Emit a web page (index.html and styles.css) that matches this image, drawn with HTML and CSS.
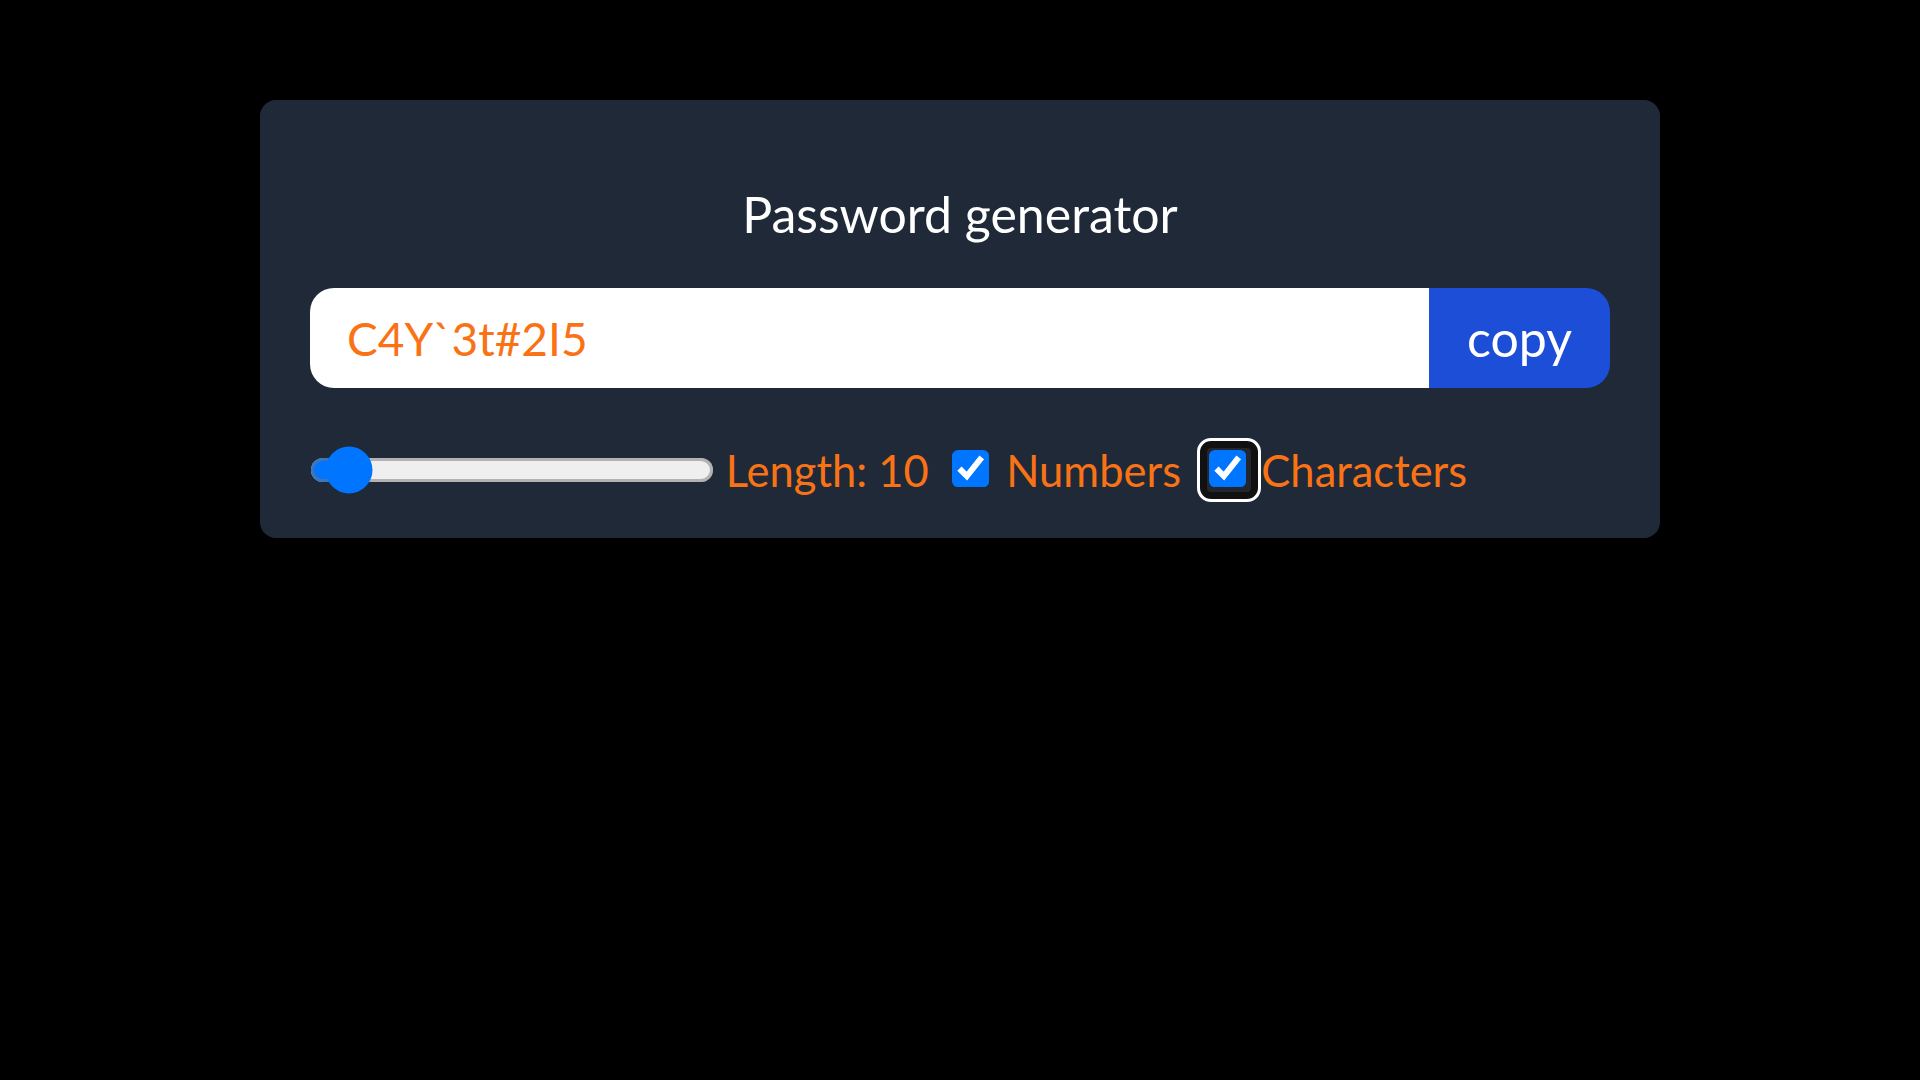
FILE: index.html
```html
<!DOCTYPE html>
<html lang="en">
<head>
<meta charset="utf-8">
<title>Password generator</title>
<link rel="stylesheet" href="styles.css">
</head>
<body>
  <div class="card">
    <h1 class="title">Password generator</h1>
    <div class="field-row">
      <input class="password" type="text" value="C4Y`3t#2I5" readonly>
      <button class="copy-btn" type="button">copy</button>
    </div>
    <div class="options">
      <input class="length-range" type="range" min="6" max="100" value="10">
      <label class="length-label">Length: 10</label>
      <input class="check" type="checkbox" id="numbers" checked>
      <label class="opt-label" for="numbers">Numbers</label>
      <span class="focus-ring"><input class="check" type="checkbox" id="chars" checked></span>
      <label class="opt-label chars-label" for="chars">Characters</label>
    </div>
  </div>
</body>
</html>
```
FILE: styles.css
```css
html, body {
  margin: 0;
  padding: 0;
  background: #000;
}
body {
  font-family: Lato, "Open Sans", sans-serif;
}
.card {
  width: 1400px;
  box-sizing: border-box;
  margin: 100px auto 0;
  padding: 84px 50px 33px;
  background: #1f2937;
  border-radius: 16px;
}
.title {
  margin: 0;
  font-weight: 400;
  font-size: 50px;
  line-height: 60px;
  color: #fff;
  text-align: center;
}
.field-row {
  display: flex;
  margin-top: 44px;
  height: 100px;
}
.password {
  flex: 1;
  min-width: 0;
  border: none;
  outline: none;
  margin: 0;
  padding: 0 37px;
  height: 100px;
  background: #fff;
  color: #f97316;
  font-family: Lato, "Open Sans", sans-serif;
  font-size: 46px;
  border-radius: 24px 0 0 24px;
}
.copy-btn {
  border: none;
  margin: 0;
  padding: 0 38px;
  height: 100px;
  background: #1d4ed8;
  color: #fff;
  font-family: Lato, "Open Sans", sans-serif;
  font-size: 50px;
  border-radius: 0 24px 24px 0;
  cursor: pointer;
}
.options {
  display: flex;
  align-items: center;
  height: 70px;
  margin-top: 47px;
  color: #f97316;
  font-size: 43.5px;
}
.length-range {
  zoom: 3;
  width: 134.6px;
  margin: 0;
}
.length-label {
  margin-left: 12px;
}
.check {
  zoom: 3.1;
  margin: 0;
}
#numbers {
  margin-left: 7.5px;
}
.opt-label {
  margin-left: 14px;
}
.focus-ring {
  display: inline-flex;
  margin-left: 19px;
  padding: 2px;
  background: #23272d;
  border: 7px solid #111;
  border-radius: 11px;
  outline: 3px solid #fff;
}
.chars-label {
  margin-left: 3px;
}
```
